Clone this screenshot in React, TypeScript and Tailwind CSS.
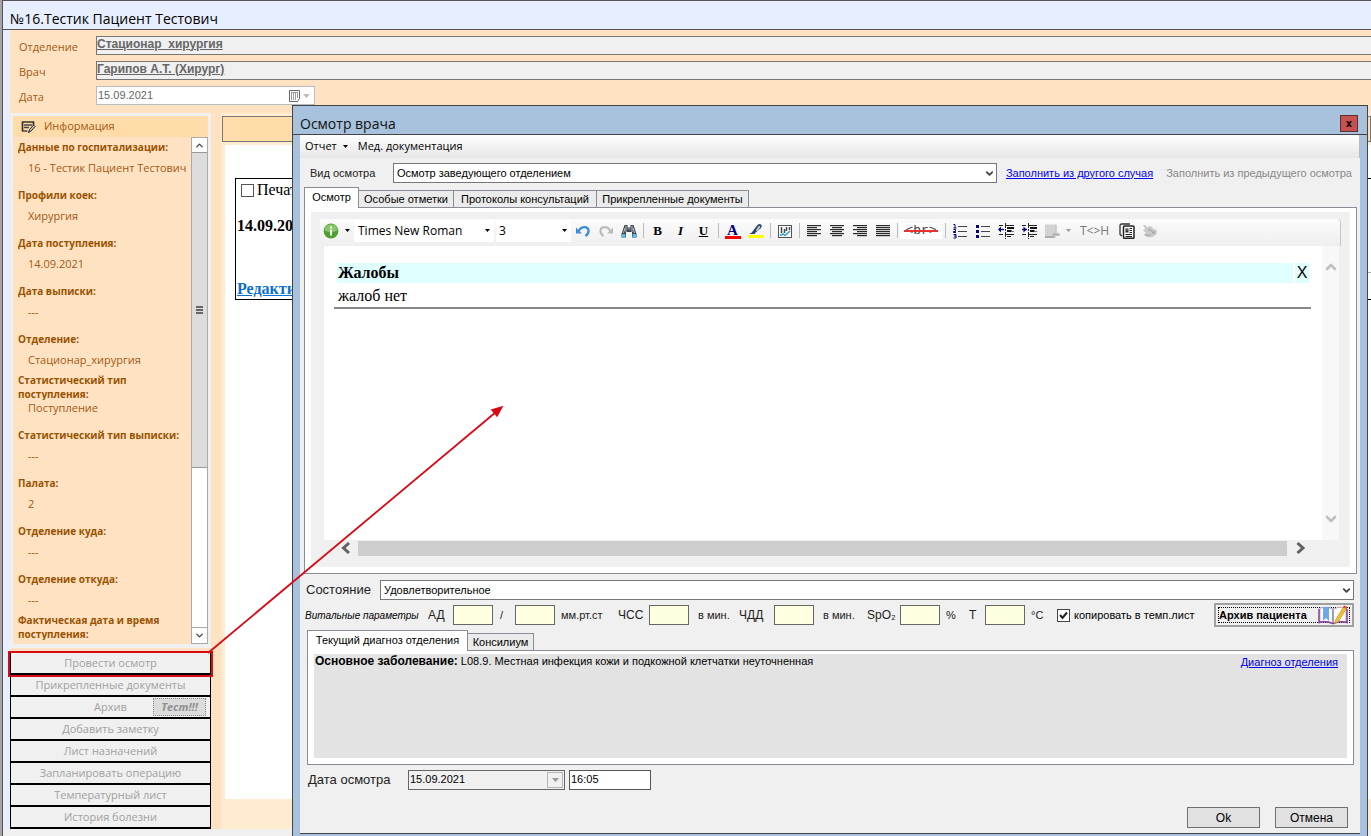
import type { ReactNode } from "react";
import { ChevronDown, ChevronUp } from "lucide-react";

const info = [
  { label: "Данные по госпитализации:", value: "16 - Тестик Пациент Тестович" },
  { label: "Профили коек:", value: "Хирургия" },
  { label: "Дата поступления:", value: "14.09.2021" },
  { label: "Дата выписки:", value: "---" },
  { label: "Отделение:", value: "Стационар_хирургия" },
  { label: "Статистический тип поступления:", value: "Поступление" },
  { label: "Статистический тип выписки:", value: "---" },
  { label: "Палата:", value: "2" },
  { label: "Отделение куда:", value: "---" },
  { label: "Отделение откуда:", value: "---" },
  { label: "Фактическая дата и время поступления:", value: "" },
];

const actions = [
  "Провести осмотр",
  "Прикрепленные документы",
  "Архив",
  "Добавить заметку",
  "Лист назначений",
  "Запланировать операцию",
  "Температурный лист",
  "История болезни",
];

function Caret({ className = "text-black" }: { className?: string }) {
  return (
    <svg viewBox="0 0 5 3" className={`h-[3px] w-[5px] shrink-0 ${className}`}>
      <path d="M0 0h5L2.500 3z" fill="currentColor" />
    </svg>
  );
}

function Combo({ id, value }: { id: string; value: string }) {
  return (
    <div className="relative h-5 min-w-0 flex-1">
      <select
        id={id}
        defaultValue={value}
        className="block h-5 w-full appearance-none border border-[#777] bg-white pl-[3px] pr-5 text-[11px] leading-4 text-black"
      >
        <option>{value}</option>
      </select>
      <ChevronDown
        className="pointer-events-none absolute right-[2px] top-[5px] h-[11px] w-[11px] text-[#444]"
        strokeWidth={4}
      />
    </div>
  );
}

function Tab({ active, className, children }: { active?: boolean; className: string; children: ReactNode }) {
  return (
    <button
      role="tab"
      aria-selected={!!active}
      className={`whitespace-nowrap border-[#888c94] text-[11px] leading-4 ${
        active
          ? "relative z-10 -mb-px h-[21px] border-x border-t bg-white"
          : "h-[17px] border-r border-t bg-[#ebebeb]"
      } ${className}`}
    >
      {children}
    </button>
  );
}

function Tool({ title, children }: { title: string; children: ReactNode }) {
  return (
    <button aria-label={title} className="flex h-[22px] w-[23px] shrink-0 items-center justify-center">
      {children}
    </button>
  );
}

function Sep() {
  return (
    <div className="flex w-[6px] shrink-0 justify-center">
      <div className="h-[15px] w-px bg-[#bdbdbd]" />
    </div>
  );
}

function Icon({ children }: { children: ReactNode }) {
  return (
    <svg viewBox="0 0 16 16" className="h-4 w-4 shrink-0" fill="none">
      {children}
    </svg>
  );
}

function Lines({ rows }: { rows: [number, number][] }) {
  return (
    <Icon>
      {rows.map(([x, w], i) => (
        <rect key={i} x={x} y={2 + i * 2} width={w} height="1.200" fill="#2a2a2a" />
      ))}
    </Icon>
  );
}

function Indent({ right }: { right?: boolean }) {
  return (
    <Icon>
      <path d="M1 2.500h4M7 2.500h9M1 11.500h4M7 11.500h9M9 13.500h4" stroke="#222" />
      <path d="M9 5h7M9 8h4.500" stroke="#111" strokeWidth="2" />
      <path d="M13 8.500h3" stroke="#777" />
      <path d="M7.500 0v16" stroke="#222" strokeDasharray="2 1" />
      <path d={right ? "M5.500 6.500L2.500 3.500v6z" : "M0 6.500L3 3.500v6z"} fill="#000080" />
      <path d="M1 6.500h5" stroke="#000080" strokeWidth="1.300" />
    </Icon>
  );
}

function EditorToolbar() {
  return (
    <div
      role="toolbar"
      className="flex h-[27px] shrink-0 items-center rounded-tr border-r border-[#c8c8c8] bg-linear-to-b from-[#fbfbfb] to-[#efefef] pb-1"
    >
      <button aria-label="Информация" className="flex w-[34px] shrink-0 items-center gap-[6px] pl-[3px]">
        <Icon>
          <circle cx="8" cy="8" r="7.400" fill="#4fa12d" />
          <path d="M1.500 7.500a6.500 6.300 0 0 1 13 0q-6 3-13 0z" fill="#a2d488" opacity=".7" />
          <path d="M8 3.500v2M8 6.800v5.700" stroke="#fff" strokeWidth="2" />
        </Icon>
        <Caret />
      </button>
      <button className="flex h-[22px] w-[140px] shrink-0 items-center justify-between bg-white pl-1 pr-1 font-['Open_Sans',sans-serif] text-[12px]">
        Times New Roman <Caret />
      </button>
      <button className="ml-[2px] flex h-[22px] w-[75px] shrink-0 items-center justify-between bg-white pl-[3px] pr-1 font-['Open_Sans',sans-serif] text-[12px]">
        3 <Caret />
      </button>
      <Tool title="Отменить">
        <Icon>
          <path d="M3.500 8.500C6 2.500 13.500 3 13.500 8c0 2.500-1.500 4-3 5" stroke="#3c8fd6" strokeWidth="2.400" />
          <path d="M1 4.500v6h6z" fill="#3c8fd6" />
        </Icon>
      </Tool>
      <Tool title="Повторить">
        <Icon>
          <path d="M12.500 8.500C10 2.500 2.500 3 2.500 8c0 2.500 1.500 4 3 5" stroke="#bcbcbc" strokeWidth="2.200" />
          <path d="M15 4.500v6H9z" fill="#bcbcbc" />
        </Icon>
      </Tool>
      <Tool title="Найти">
        <Icon>
          <path d="M3.500 2H6.500v2.500h3V2h3l1 3 2 6v3.500h-4.500V9h-6v5.500H.5V11l2-6z" fill="#3d4650" />
          <path d="M5 3v6M11 3v6M2.500 10l1.500-5M13.500 10L12 5" stroke="#b9c4cc" />
          <path d="M6.500 6h3" stroke="#9aa5ad" />
          <rect x="1" y="11" width="3.500" height="3.500" rx="1" fill="#58c2ea" />
          <rect x="11.500" y="11" width="3.500" height="3.500" rx="1" fill="#58c2ea" />
        </Icon>
      </Tool>
      <Sep />
      <Tool title="Полужирный">
        <span className="font-['Liberation_Serif',serif] text-[13px] font-black">B</span>
      </Tool>
      <Tool title="Курсив">
        <span className="font-['Liberation_Serif',serif] text-[13px] font-bold italic">I</span>
      </Tool>
      <Tool title="Подчёркнутый">
        <span className="font-['Liberation_Serif',serif] text-[13px] font-bold underline">U</span>
      </Tool>
      <Sep />
      <Tool title="Цвет текста">
        <span className="flex w-4 flex-col items-center pt-px font-['Liberation_Serif',serif] text-[15px] font-bold leading-3 text-[#000080]">
          A
          <span className="h-[3px] w-full bg-[#ff0000]" />
        </span>
      </Tool>
      <Tool title="Цвет фона">
        <Icon>
          <rect x="0" y="12" width="16" height="3" fill="#ffff00" />
          <path d="M3 10.500L9.500 2q2-2 4 0 1 1.500-1 3.500L7 10z" fill="#2b3f74" />
          <path d="M8 7l3-4.500 1.500 1.500L9 8.500z" fill="#b9d7c0" />
          <path d="M2 10.500h5" stroke="#444" />
        </Icon>
      </Tool>
      <Sep />
      <Tool title="Диаграмма">
        <Icon>
          <rect x="1.500" y="2.500" width="13" height="12" fill="#fff" stroke="#555" />
          <path d="M4.500 4v6M7.500 6v4M9.500 4v4M12.500 4v3" stroke="#444" strokeWidth="1.500" />
          <path d="M3 12.500l3-1.500 2 1.500 5-4.500" stroke="#2f9fd8" strokeWidth="1.500" />
        </Icon>
      </Tool>
      <Sep />
      <Tool title="По левому краю">
        <Lines rows={[[1, 14], [1, 10], [1, 14], [1, 10], [1, 14], [1, 10]]} />
      </Tool>
      <Tool title="По центру">
        <Lines rows={[[1, 14], [3, 10], [1, 14], [3, 10], [1, 14], [3, 10]]} />
      </Tool>
      <Tool title="По правому краю">
        <Lines rows={[[1, 14], [5, 10], [1, 14], [5, 10], [1, 14], [5, 10]]} />
      </Tool>
      <Tool title="По ширине">
        <Lines rows={[[1, 14], [1, 14], [1, 14], [1, 14], [1, 14], [1, 14]]} />
      </Tool>
      <Sep />
      <button className="relative flex h-4 w-[42px] shrink-0 items-center justify-center bg-white font-['Liberation_Mono',monospace] text-[13px] text-[#444]">
        {"<br>"}
        <svg viewBox="0 0 34 2" className="absolute left-1 top-[7px] h-[2px] w-[34px]">
          <path d="M0 1h34" stroke="#e83030" strokeWidth="2" />
        </svg>
      </button>
      <Sep />
      <Tool title="Нумерованный список">
        <Icon>
          <path d="M6 3.500h9M6 8.500h9M6 13.500h9" stroke="#444" />
          <path d="M1.500 1.500H3v3.500M1.500 5h3M1.500 6.500h2v2h-2v1h2.500M1.500 11.500H4v3.500H1.500M2 13h2" stroke="#000080" />
        </Icon>
      </Tool>
      <Tool title="Маркированный список">
        <Icon>
          <path d="M6 3.500h9M6 8.500h9M6 13.500h9" stroke="#444" />
          <path d="M1 2h3v3H1zM1 7h3v3H1zM1 12h3v3H1z" fill="#000080" />
        </Icon>
      </Tool>
      <Tool title="Уменьшить отступ">
        <Indent />
      </Tool>
      <Tool title="Увеличить отступ">
        <Indent right />
      </Tool>
      <Tool title="Вставить">
        <Icon>
          <path d="M1 1.500h11.500v9h3v2.500h-4v2H1z" fill="#d2d2d2" />
          <path d="M1 14h9.500M8.500 11.500h7" stroke="#acacac" strokeWidth="2" />
          <path d="M12 2v8" stroke="#bcbcbc" />
        </Icon>
      </Tool>
      <div className="flex w-[11px] shrink-0 justify-center">
        <Caret className="text-[#999]" />
      </div>
      <button className="w-[41px] shrink-0 font-['Open_Sans',sans-serif] text-[12px] text-[#777]">
        {"T<>H"}
      </button>
      <Tool title="Копировать">
        <Icon>
          <path d="M3 12.500h-.5a1.500 1.500 0 0 1-1.500-1.500V2.500A1.500 1.500 0 0 1 2.500 1H11" stroke="#333" strokeWidth="1.300" />
          <rect x="4.500" y="3" width="10.500" height="12.300" rx="1" fill="#fff" stroke="#222" strokeWidth="1.500" />
          <path d="M6.500 5.500h3v4h-3z" fill="#222" />
          <path d="M7.500 6.500h1v1h-1z" fill="#fff" />
          <path d="M10.500 5.500H13M10.500 7.500H13M10.500 9.500H13M6.500 11.500H13M6.500 13.500H13" stroke="#222" />
        </Icon>
      </Tool>
      <Tool title="Сервис">
        <Icon>
          <path d="M1 2h2.500L5 4.500 7 3q3 0 4.500 3 3.500 0 3.500 3-.5 4-3.500 4-1 1.500-3.500 1.500-5 0-6-3l2.500-1L1 7.500 3 6z" fill="#cbcbcb" />
          <path d="M3 11q3 2.500 6 .5M6 6.500q3 0 4 2.500" stroke="#adadad" strokeWidth="1.400" />
          <circle cx="11.500" cy="9.500" r="1.500" fill="#a8a8a8" />
        </Icon>
      </Tool>
    </div>
  );
}

function Editor() {
  return (
    <div className="flex min-h-0 flex-1 flex-col border border-[#888c94] bg-white px-[6px] pb-[6px] pt-1">
      <div className="flex min-h-0 flex-1 flex-col bg-[#f0f0f0] pb-[11px] pl-[9px] pr-[9px] pt-[7px]">
        <EditorToolbar />
        <div className="ml-1 mr-[2px] flex min-h-0 flex-1 bg-white">
          <div className="min-w-0 flex-1 pl-[10px] pr-[11px] pt-[17px] font-['Liberation_Serif',serif] text-[16px] leading-5 text-black">
            <div className="flex gap-[2px] pl-[3px] pr-[2px]">
              <h2 className="h-5 flex-1 bg-[#dfffff] pl-px font-bold">Жалобы</h2>
              <button aria-label="Удалить раздел" className="w-[14px] bg-[#dfffff] text-center font-['Liberation_Sans',sans-serif] text-[16px]">
                X
              </button>
            </div>
            <p className="h-[26px] border-b-2 border-[#888] pl-1 pt-[3px]">жалоб нет</p>
          </div>
          <div className="flex w-[17px] flex-col items-center justify-between bg-[#f8f8f8] py-[13px] text-[#c0c0c0]">
            <ChevronUp className="h-4 w-4" strokeWidth={4} />
            <ChevronDown className="h-4 w-4" strokeWidth={4} />
          </div>
        </div>
        <div className="mr-[27px] flex h-4 items-center pl-[18px] text-[#606060]">
          <svg viewBox="0 0 14 14" className="h-[14px] w-5 shrink-0" fill="none" stroke="currentColor" strokeWidth="3">
            <path d="M8 2L2.500 7 8 12" />
          </svg>
          <div className="h-[15px] flex-1 bg-[#cdcdcd]" />
          <svg viewBox="0 0 14 14" className="h-[14px] w-[27px] shrink-0" fill="none" stroke="currentColor" strokeWidth="3">
            <path d="M4 2l5.500 5L4 12" />
          </svg>
        </div>
      </div>
    </div>
  );
}

function VitalInput({ label }: { label: string }) {
  return (
    <input
      type="text"
      aria-label={label}
      className="h-5 w-10 shrink-0 border border-[#666] bg-[#ffffe1] px-1 text-[11px]"
    />
  );
}

function Vitals() {
  return (
    <div className="flex h-6 items-center whitespace-nowrap text-[11px] text-[#222]">
      <span className="w-[123px] shrink-0 text-[10px] italic text-black">Витальные параметры</span>
      <span className="w-[25px] shrink-0 text-[12px]">АД</span>
      <VitalInput label="АД систолическое" />
      <span className="w-[22px] shrink-0 pl-[7px]">/</span>
      <VitalInput label="АД диастолическое" />
      <span className="w-[63px] shrink-0 pl-[6px]">мм.рт.ст</span>
      <span className="w-[31px] shrink-0 text-[12px]">ЧСС</span>
      <VitalInput label="ЧСС" />
      <span className="w-[50px] shrink-0 pl-[9px]">в мин.</span>
      <span className="w-[35px] shrink-0 text-[12px]">ЧДД</span>
      <VitalInput label="ЧДД" />
      <span className="w-[53px] shrink-0 pl-[9px]">в мин.</span>
      <span className="w-[33px] shrink-0 text-[12px]">SpO₂</span>
      <VitalInput label="SpO₂" />
      <span className="w-[29px] shrink-0 pl-[6px]">%</span>
      <span className="w-4 shrink-0 text-[12px]">T</span>
      <VitalInput label="Температура" />
      <span className="w-8 shrink-0 pl-[6px]">°C</span>
      <label className="flex items-center gap-1 text-black">
        <span className="relative flex h-[13px] w-[13px]">
          <input
            type="checkbox"
            defaultChecked
            className="h-[13px] w-[13px] appearance-none border border-[#444] bg-white"
          />
          <svg viewBox="0 0 13 13" className="pointer-events-none absolute inset-0 h-[13px] w-[13px]">
            <path d="M3 6l2.500 3L10 3.500" fill="none" stroke="#222" strokeWidth="2" />
          </svg>
        </span>
        копировать в темп.лист
      </label>
      <button className="ml-auto flex h-6 w-[140px] shrink-0 items-center border-2 border-[#a0a0a0] bg-[#f0f0f0] p-[2px] text-black">
        <span className="flex h-4 w-full items-center justify-between border border-dotted border-black text-[11px] font-bold">
          Архив пациента
          <svg viewBox="0 0 32 20" className="h-5 w-8 shrink-0">
            <path d="M3 3q7-2 13 1 6-3 13-1v14q-7-2-13 1-6-3-13-1z" fill="#fff" stroke="#b9a9c9" />
            <path d="M2 4v13.500q7-2 14 1 7-3 14-1V4" fill="none" stroke="#8a3a9c" strokeWidth="1.500" />
            <path d="M16 4v14" stroke="#9aa0c0" strokeWidth="2" />
            <path d="M6 2h6v14l-3-3-3 3z" fill="#6fa8e8" />
            <path d="M17.500 19l1-4L27 1l3 1.500-8.500 14z" fill="#f2c230" stroke="#b88a20" strokeWidth=".6" />
            <path d="M26 2.500l1-2 3.500 1.500-1 2z" fill="#d9503c" />
          </svg>
        </span>
      </button>
    </div>
  );
}

function ExamDialog() {
  return (
    <div
      role="dialog"
      aria-label="Осмотр врача"
      className="absolute bottom-0 left-[290px] right-[3px] top-[105px] z-10 flex flex-col border-x border-t border-[#444] bg-[#a8c1dd]"
    >
      <div className="flex h-[29px] shrink-0 items-center justify-between border-b border-[#444] pl-[7px] pr-[9px] pt-[6px]">
        <h1 className="font-['Open_Sans',sans-serif] text-[14px] text-[#111]">Осмотр врача</h1>
        <button
          aria-label="Закрыть"
          className="flex h-[17px] w-[18px] items-center justify-center border border-[#5a3030] bg-[#c75050] pb-px font-['Open_Sans',sans-serif] text-[10px] font-bold leading-3"
        >
          x
        </button>
      </div>

      <div className="mx-[7px] mb-[2px] flex min-h-0 flex-1 flex-col border-b border-[#444] bg-[#f0f0f0] pb-[5px]">
        {/* меню */}
        <div className="flex h-[23px] shrink-0 items-center border-r border-[#bbb] bg-linear-to-b from-white to-[#e6e6e6] pl-[5px] font-['Open_Sans',sans-serif] text-[11px]">
          <button className="flex items-center gap-[6px]">
            Отчет <Caret />
          </button>
          <button className="ml-[10px]">Мед. документация</button>
        </div>

        <div className="mt-[5px] flex h-5 shrink-0 items-center whitespace-nowrap pl-[10px] pr-2 text-[11px]">
          <label htmlFor="kind" className="w-[83px] shrink-0 text-[#222]">
            Вид осмотра
          </label>
          <Combo id="kind" value="Осмотр заведующего отделением" />
          <a href="#case" className="ml-[9px] text-[#0000ee] underline">
            Заполнить из другого случая
          </a>
          <span className="ml-[13px] text-[#888]">Заполнить из предыдущего осмотра</span>
        </div>

        <div className="ml-1 mr-[3px] mt-1 flex min-h-0 flex-1 flex-col">
          <div role="tablist" className="flex shrink-0 items-end">
            <Tab active className="w-[55px] pb-[2px]">Осмотр</Tab>
            <Tab className="w-[95px]">Особые отметки</Tab>
            <Tab className="w-[143px]">Протоколы консультаций</Tab>
            <Tab className="w-[152px]">Прикрепленные документы</Tab>
          </div>
          <Editor />
        </div>

        <div className="mt-[6px] flex h-5 shrink-0 items-center pl-[6px] pr-[6px]">
          <label htmlFor="state" className="w-[74px] text-[13px] text-[#222]">
            Состояние
          </label>
          <Combo id="state" value="Удовлетворительное" />
        </div>

        <div className="mt-[3px] shrink-0 pl-[5px] pr-[6px]">
          <Vitals />
        </div>

        <div className="ml-[7px] mr-[6px] mt-[3px] shrink-0">
          <div role="tablist" className="flex items-end">
            <Tab active className="w-[161px] pb-[2px]">Текущий диагноз отделения</Tab>
            <Tab className="w-[66px]">Консилиум</Tab>
          </div>
          <div className="h-[115px] border border-[#888c94] bg-white px-[6px] pb-[6px] pt-[3px]">
            <div className="flex h-full justify-between bg-[#e3e3e3] pl-px pr-[9px] text-[11px] leading-4">
              <p className="leading-[14px]">
                <b className="text-[12px]">Основное заболевание:</b> L08.9. Местная инфекция кожи и подкожной клетчатки
                неуточненная
              </p>
              <a href="#diagnosis" className="text-[#0000ee] underline">
                Диагноз отделения
              </a>
            </div>
          </div>
        </div>

        <div className="mt-[5px] flex h-5 shrink-0 items-center pl-2">
          <label htmlFor="exam-date" className="w-[100px] text-[13px] text-[#222]">
            Дата осмотра
          </label>
          <div className="flex h-5 w-[157px] items-center border border-[#666] bg-[#f0f0f0] pr-px">
            <input
              id="exam-date"
              type="text"
              defaultValue="15.09.2021"
              className="min-w-0 flex-1 bg-transparent pb-[3px] pl-px text-[11px] leading-4"
            />
            <button aria-label="Выбрать дату" className="flex h-4 w-4 items-center justify-center border border-[#b5b5b5]">
              <svg viewBox="0 0 7 4" className="h-1 w-[7px] text-[#999]">
                <path d="M0 0h7L3.500 4z" fill="currentColor" />
              </svg>
            </button>
          </div>
          <input
            type="text"
            aria-label="Время осмотра"
            defaultValue="16:05"
            className="ml-1 h-5 w-[82px] border border-[#555] bg-white pb-[3px] pl-px text-[11px]"
          />
        </div>

        <div className="mt-[17px] flex shrink-0 justify-end gap-[15px] pr-3 text-[12px]">
          <button className="h-[21px] w-[73px] border border-[#707070] bg-[#e1e1e1]">Ok</button>
          <button className="h-[21px] w-[73px] border border-[#707070] bg-[#e1e1e1]">Отмена</button>
        </div>
      </div>
    </div>
  );
}

function Sidebar() {
  return (
    <aside className="flex w-[201px] shrink-0 flex-col">
      <div className="flex h-[535px] flex-col border-[3px] border-b-4 border-[#f0f0f0]">
        <div className="flex h-[21px] shrink-0 items-center gap-[7px] bg-[#ffdcaa] pl-2 text-[11px]">
          <Icon>
            <path d="M1.500 12V3h11v3M1 3h12" stroke="#333" strokeWidth="1.700" />
            <path d="M3 6h8M3 8.500h5M1 12h5.500" stroke="#444" strokeWidth="1.500" />
            <path d="M7.500 13.500l1-3 4-4.500 1.500 1.500-4 4.500z" fill="#ccc" stroke="#222" />
          </Icon>
          Информация
        </div>
        <div className="flex min-h-0 flex-1">
          <dl className="-mt-1 min-w-0 flex-1 overflow-hidden pl-[5px]">
            {info.map((item) => (
              <div key={item.label} className="h-12">
                <dt className="flex h-[27px] items-center overflow-hidden pr-2 text-[10px] font-bold leading-[14px] text-[#9a5200]">
                  {item.label}
                </dt>
                <dd className="h-[15px] whitespace-nowrap pl-[10px] text-[11px] leading-[15px]">{item.value}</dd>
              </div>
            ))}
          </dl>
          <div className="flex w-[17px] shrink-0 flex-col border border-[#aaa] bg-white">
            <div className="flex h-[14px] items-center justify-center text-[#444]">
              <ChevronUp className="h-[11px] w-[11px]" strokeWidth={3} />
            </div>
            <div className="flex h-[316px] flex-col items-center justify-center gap-px border-y border-[#999] bg-[#dcdcdc]">
              <div className="h-[2px] w-[7px] bg-[#666]" />
              <div className="h-[2px] w-[7px] bg-[#666]" />
              <div className="h-[2px] w-[7px] bg-[#666]" />
            </div>
            <div className="mt-auto flex h-4 items-center justify-center border-t border-[#aaa] text-[#444]">
              <ChevronDown className="h-[11px] w-[11px]" strokeWidth={3} />
            </div>
          </div>
        </div>
      </div>

      <nav className="mt-1 border-t border-black text-[#a0a0a0]">
        {actions.map((action, i) => (
          <button
            key={action}
            className={`relative flex h-[22px] w-full items-center justify-center border-x border-b-2 border-black bg-[#f0f0f0] text-[11px] ${
              i === 0 ? "z-10 outline-2 outline-[#d80a14]" : ""
            }`}
          >
            {action}
            {action === "Архив" && (
              <span className="absolute right-1 top-px flex h-[18px] w-[53px] items-center justify-center border border-dotted border-[#888] bg-[#dcdcdc] font-bold italic text-[#909090]">
                Тест!!!
              </span>
            )}
          </button>
        ))}
      </nav>
    </aside>
  );
}

export default function App() {
  return (
    <div className="relative flex h-screen min-h-[720px] w-full flex-col overflow-hidden border-l-2 border-[#a5a5a5] bg-[#f0f0f0] font-['Liberation_Sans',Arial,sans-serif] text-black">
      <header className="flex h-[30px] shrink-0 items-center border-b border-l border-t border-[#555] bg-[#e6eeff] pl-[7px] pt-[6px]">
        <h1 className="font-['Open_Sans',sans-serif] text-[14px]">№16.Тестик Пациент Тестович</h1>
      </header>

      <div className="flex min-h-0 flex-1 flex-col border-l border-[#555] bg-[#e6eeff] pl-[7px] font-['Open_Sans',sans-serif] text-[11px] text-[#a05a14]">
        <div className="flex shrink-0 flex-col gap-[6px] bg-[#ffe2c2] pb-2 pl-[9px] pt-[6px]">
          <div className="flex h-[19px] items-center">
            <label htmlFor="dept" className="w-[77px] shrink-0 pt-[3px]">Отделение</label>
            <input
              id="dept"
              type="text"
              readOnly
              defaultValue="Стационар_хирургия"
              className="h-[19px] min-w-0 flex-1 border-y border-l border-[#777] bg-[#f0f0f0] pb-1 font-['Liberation_Sans',sans-serif] text-[12px] font-bold text-[#666] underline"
            />
          </div>
          <div className="flex h-[19px] items-center">
            <label htmlFor="doctor" className="w-[77px] shrink-0 pt-[3px]">Врач</label>
            <input
              id="doctor"
              type="text"
              readOnly
              defaultValue="Гарипов А.Т. (Хирург)"
              className="h-[19px] min-w-0 flex-1 border-y border-l border-[#777] bg-[#f0f0f0] pb-1 font-['Liberation_Sans',sans-serif] text-[12px] font-bold text-[#666] underline"
            />
          </div>
          <div className="flex h-[19px] items-center">
            <label htmlFor="date" className="w-[77px] shrink-0 pt-[3px]">Дата</label>
            <div className="flex h-[19px] w-[219px] items-center border border-[#b5bcc4] bg-white pr-1">
              <input
                id="date"
                type="text"
                defaultValue="15.09.2021"
                className="min-w-0 flex-1 pl-px font-['Liberation_Sans',sans-serif] text-[11px] text-[#666]"
              />
              <button aria-label="Календарь" className="flex items-center gap-[2px]">
                <svg viewBox="0 0 12 12" className="h-3 w-3" fill="none">
                  <path d="M.5.5h10v8l-2 3h-8z" fill="#fff" stroke="#666" />
                  <path d="M2.500 2v8M4.500 2v8M6.500 2v8M8.500 2v6M2 2.500h7" stroke="#999" />
                </svg>
                <svg viewBox="0 0 7 4" className="h-1 w-[7px]">
                  <path d="M0 0h7L3.500 4z" fill="#bbb" />
                </svg>
              </button>
            </div>
          </div>
        </div>

        <div className="flex min-h-0 flex-1 bg-[#ffe2c2]">
          <Sidebar />

          {/* записи осмотров */}
          <main className="ml-[10px] flex min-w-0 flex-1 flex-col bg-[#ffebd0] pt-[3px] text-black">
            <div className="ml-px h-[26px] shrink-0 border border-[#777] bg-[#ffdcaa]" />
            <div className="mb-[30px] ml-1 mt-[3px] flex-1 bg-white pl-[10px] pt-[33px] font-['Liberation_Serif',serif] text-[16px]">
              <div className="flex h-[122px] border-y border-l border-black">
                <div className="flex-1 pl-px">
                  <label className="flex h-[22px] items-center gap-[3px] pl-1">
                    <input type="checkbox" className="h-[13px] w-[13px] appearance-none border border-[#555] bg-white" />
                    Печать
                  </label>
                  <p className="mt-[13px] font-bold">14.09.2021</p>
                  <a href="#edit" className="mt-[39px] block font-bold text-[#0b6fd0] underline">
                    Редактировать
                  </a>
                </div>
                <div className="mt-[93px] w-16 border-t border-[#aaa]" />
              </div>
            </div>
          </main>
        </div>
      </div>
      <div className="h-[7px] shrink-0 border-l border-[#555]" />

      <ExamDialog />

      {/* стрелка от кнопки к окну осмотра */}
      <svg
        viewBox="0 0 300 250"
        className="pointer-events-none absolute left-[203px] top-[405px] z-20 h-[250px] w-[300px]"
      >
        <path d="M3 248L291 7" stroke="#d80a14" strokeWidth="1.800" />
        <path d="M297 2l-5 9-5-6z" fill="#d80a14" stroke="#d80a14" strokeWidth="1.500" />
      </svg>
    </div>
  );
}
